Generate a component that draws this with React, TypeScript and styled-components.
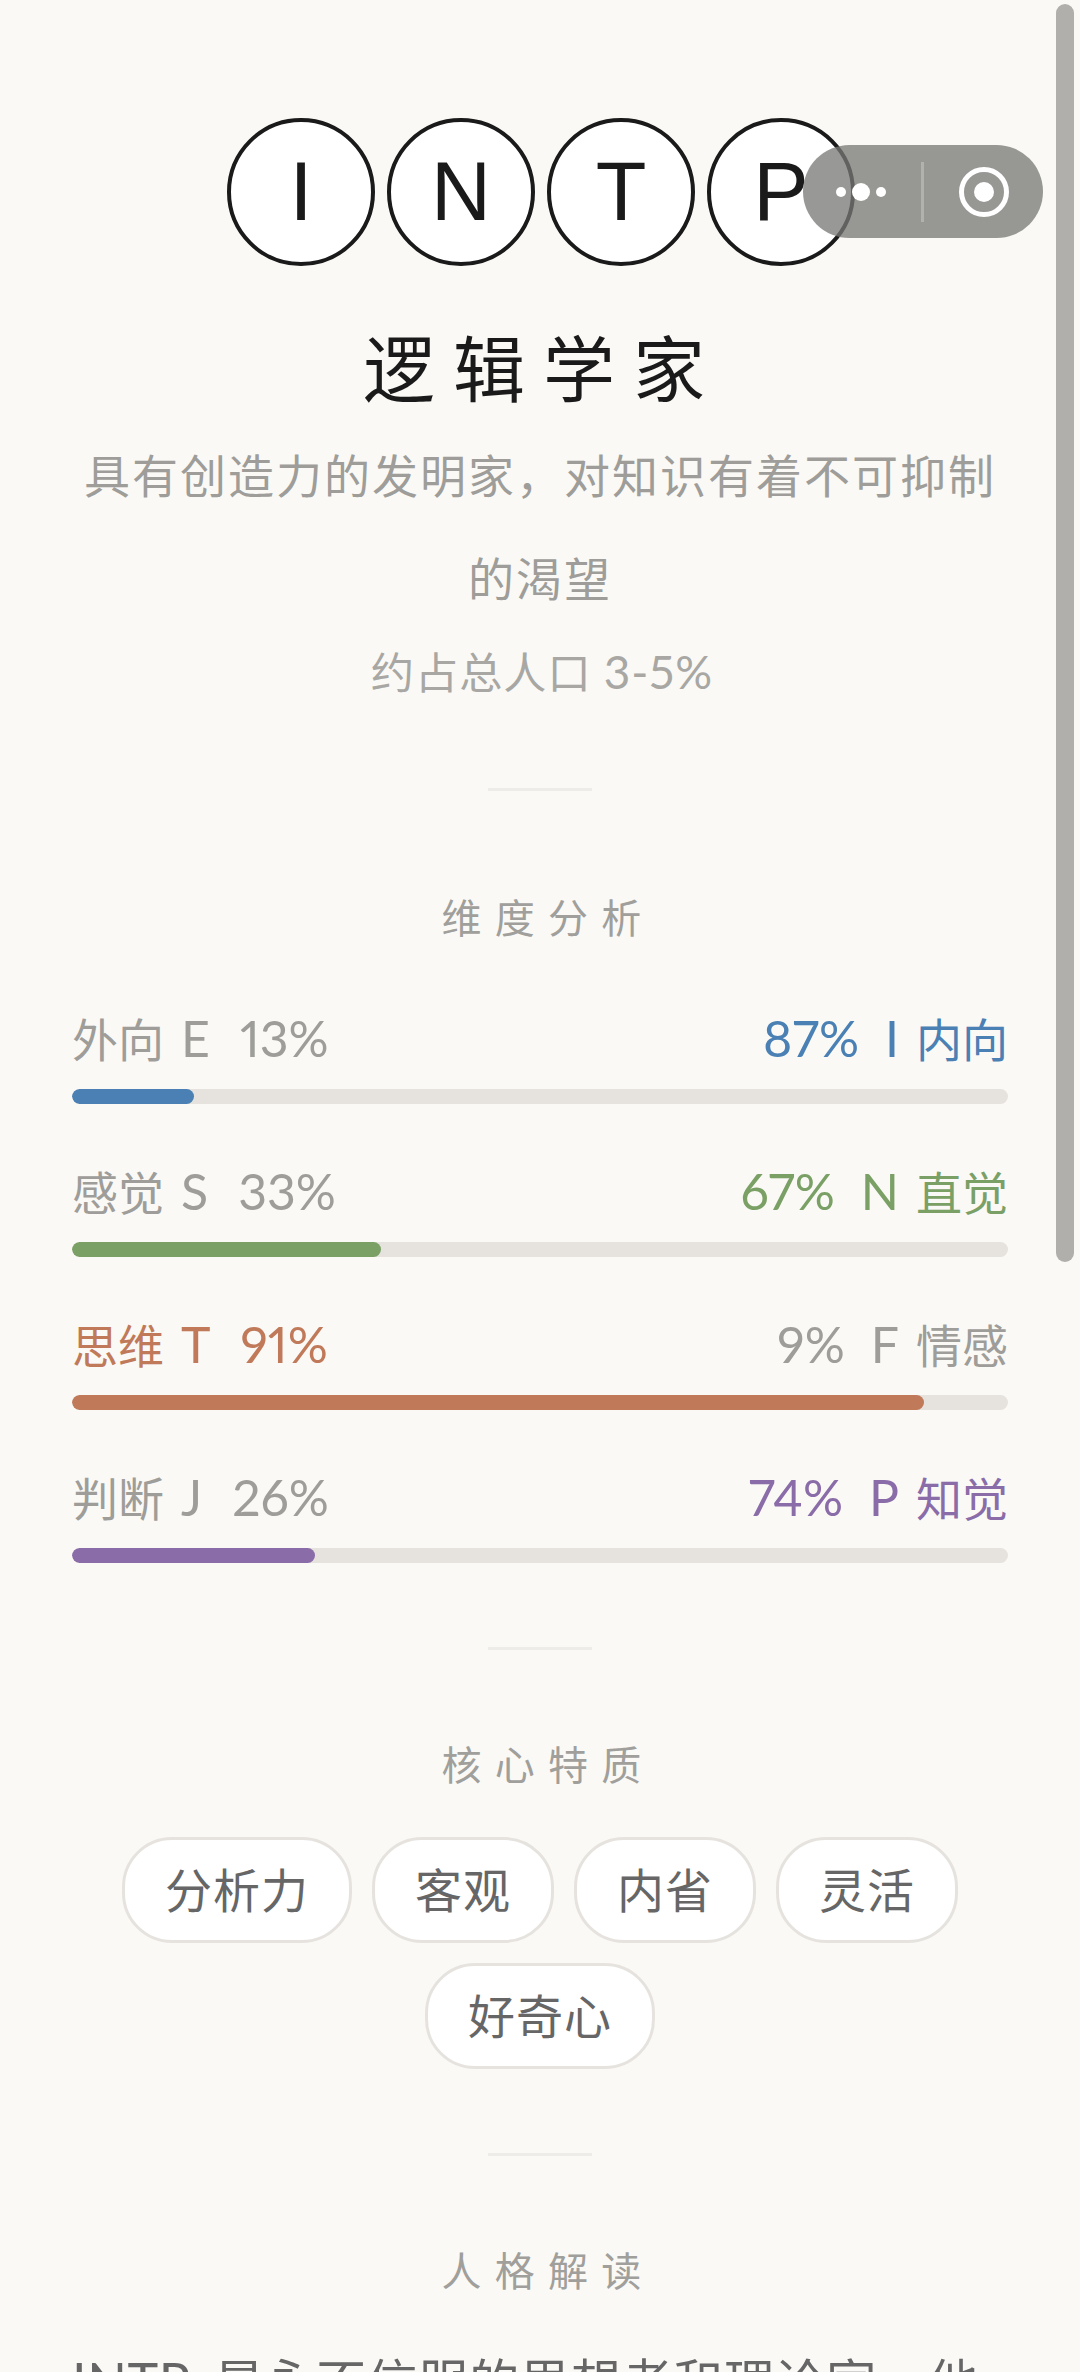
import React from "react";
import styled, { createGlobalStyle } from "styled-components";

const Global = createGlobalStyle`
  html, body { margin: 0; padding: 0; height: 2372px; overflow: hidden; background: #faf9f6; }
  #root { height: 2372px; overflow: hidden; }
  * { box-sizing: border-box; }
`;

const FONT = `"Lato", "Noto Sans CJK SC", sans-serif`;

const Page = styled.div`
  position: relative;
  width: 1080px;
  height: 2372px;
  overflow: hidden;
  background: #faf9f6;
  padding: 118px 72px 0;
  font-family: ${FONT};
  font-weight: 400;
  font-variant-numeric: proportional-nums;
`;

const Hero = styled.header`
  display: flex;
  flex-direction: column;
  align-items: center;
`;

const Letters = styled.div`
  display: flex;
  justify-content: center;
  gap: 12px;
  padding-left: 2px;
  margin-bottom: 52px;
`;

const Letter = styled.div`
  width: 148px;
  height: 148px;
  border: 4.3px solid #1a1a1a;
  border-radius: 50%;
  background: #fff;
  color: #1a1a1a;
  display: flex;
  align-items: center;
  justify-content: center;
  font-family: "Liberation Sans", sans-serif;
  font-size: 83px;
  font-weight: 400;
`;

const Title = styled.h1`
  margin: 0;
  font-size: 72px;
  line-height: 100px;
  font-weight: 400;
  letter-spacing: 18px;
  padding-left: 6px;
  color: #1a1a1a;
`;

const Subtitle = styled.p`
  margin: 6px 0 0;
  width: 936px;
  font-size: 46px;
  line-height: 103px;
  letter-spacing: 2px;
  text-align: center;
  color: #9e9d99;
`;

const Population = styled.p`
  margin: 12px 0 0;
  padding-left: 4px;
  font-size: 43.2px;
  line-height: 60px;
  letter-spacing: 1px;
  color: #a8a7a3;
`;

const Latin = styled.span<{ $size: number }>`
  font-size: ${(p) => p.$size}px;
`;

const Divider = styled.div<{ $top: number }>`
  width: 104px;
  height: 3px;
  background: #edecE8;
  margin: ${(p) => p.$top}px auto 0;
`;

const SectionTitle = styled.h2<{ $top: number }>`
  margin: ${(p) => p.$top}px 0 0;
  padding-left: 16px;
  font-size: 40px;
  line-height: 56px;
  font-weight: 400;
  letter-spacing: 13.3px;
  text-align: center;
  color: #a09f9b;
`;

const Dimensions = styled.section`
  margin-top: 60px;
  display: flex;
  flex-direction: column;
  gap: 55px;
`;

const Dimension = styled.div`
  display: flex;
  flex-direction: column;
`;

const Labels = styled.div`
  display: flex;
  justify-content: space-between;
  height: 64px;
  margin-bottom: 19px;
`;

const Label = styled.div<{ $color: string; $gap: number }>`
  display: flex;
  align-items: baseline;
  gap: ${(p) => p.$gap}px;
  font-size: 46px;
  line-height: 64px;
  color: ${(p) => p.$color};
`;

const Trait = styled.span`
  display: inline-flex;
  align-items: baseline;
  gap: 17px;
`;

const Value = styled.span`
  font-size: 50px;
`;

const Track = styled.div`
  height: 15px;
  border-radius: 8px;
  background: #e6e3df;
  overflow: hidden;
`;

const Fill = styled.div<{ $color: string }>`
  height: 100%;
  border-radius: 8px;
  background: ${(p) => p.$color};
`;

const Tags = styled.div`
  margin-top: 44px;
  display: flex;
  flex-wrap: wrap;
  justify-content: center;
  gap: 20px;
`;

const Tag = styled.span`
  height: 106px;
  padding: 0 40px;
  border: 3px solid #e6e3df;
  border-radius: 50px;
  background: #fff;
  color: #666;
  font-size: 47px;
  letter-spacing: 1px;
  line-height: 100px;
`;

const Body = styled.p`
  margin: 36px 0 0;
  font-size: 50.4px;
  line-height: 92px;
  letter-spacing: 0.6px;
  word-spacing: 10px;
  color: #666;
  white-space: nowrap;
`;

const Capsule = styled.div`
  position: absolute;
  top: 145px;
  left: 803px;
  width: 240px;
  height: 93px;
  border-radius: 47px;
  background: rgba(120, 119, 117, 0.76);
`;

const CapsuleIcon = styled.svg`
  display: block;
`;

const ScrollThumb = styled.div`
  position: absolute;
  top: 4px;
  left: 1056px;
  width: 18px;
  height: 1258px;
  border-radius: 9px;
  background: #b0afac;
`;

const GREY = "#9e9d99";

const dims = [
  { lc: "外向", ll: "E", lv: "13%", rv: "87%", rl: "I", rc: "内向", pct: 13, color: "#4a80b4", side: "r" },
  { lc: "感觉", ll: "S", lv: "33%", rv: "67%", rl: "N", rc: "直觉", pct: 33, color: "#7aa066", side: "r" },
  { lc: "思维", ll: "T", lv: "91%", rv: "9%", rl: "F", rc: "情感", pct: 91, color: "#c07a5a", side: "l" },
  { lc: "判断", ll: "J", lv: "26%", rv: "74%", rl: "P", rc: "知觉", pct: 26, color: "#8a6ca8", side: "r" },
];

export default function App() {
  return (
    <Page>
      <Global />
      <Hero>
        <Letters>
          {["I", "N", "T", "P"].map((c) => (
            <Letter key={c}>{c}</Letter>
          ))}
        </Letters>
        <Title>逻辑学家</Title>
        <Subtitle>具有创造力的发明家，对知识有着不可抑制的渴望</Subtitle>
        <Population>
          约占总人口 <Latin $size={46}>3-5%</Latin>
        </Population>
      </Hero>
      <Divider $top={86} />
      <SectionTitle $top={99}>维度分析</SectionTitle>
      <Dimensions>
        {dims.map((d) => (
          <Dimension key={d.lc}>
            <Labels>
              <Label $gap={30} $color={d.side === "l" ? d.color : GREY}>
                <Trait>
                  <span>{d.lc}</span>
                  <Value>{d.ll}</Value>
                </Trait>
                <Value>{d.lv}</Value>
              </Label>
              <Label $gap={26} $color={d.side === "r" ? d.color : GREY}>
                <Value>{d.rv}</Value>
                <Trait>
                  <Value>{d.rl}</Value>
                  <span>{d.rc}</span>
                </Trait>
              </Label>
            </Labels>
            <Track>
              <Fill $color={d.color} style={{ width: `${d.pct}%` }} />
            </Track>
          </Dimension>
        ))}
      </Dimensions>
      <Divider $top={84} />
      <SectionTitle $top={87}>核心特质</SectionTitle>
      <Tags>
        {["分析力", "客观", "内省", "灵活", "好奇心"].map((t) => (
          <Tag key={t}>{t}</Tag>
        ))}
      </Tags>
      <Divider $top={84} />
      <SectionTitle $top={87}>人格解读</SectionTitle>
      <Body>
        <Latin $size={52}>INTP</Latin> 是永不信服的思想者和理论家，他
      </Body>
      <Capsule>
        <CapsuleIcon width="240" height="93" viewBox="0 0 240 93">
          <circle cx="38" cy="47" r="5" fill="#fff" />
          <circle cx="58" cy="47" r="9" fill="#fff" />
          <circle cx="78" cy="47" r="5" fill="#fff" />
          <rect x="118" y="17" width="3" height="60" fill="#fff" opacity="0.25" />
          <circle cx="181" cy="47" r="22.5" fill="none" stroke="#fff" strokeWidth="5" />
          <circle cx="181" cy="47" r="10" fill="#fff" />
        </CapsuleIcon>
      </Capsule>
      <ScrollThumb />
    </Page>
  );
}
